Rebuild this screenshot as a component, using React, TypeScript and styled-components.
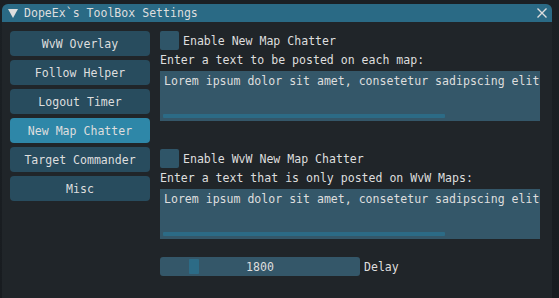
import React from 'react';
import styled, { createGlobalStyle } from 'styled-components';

const colors = {
  page: '#191d21',
  window: '#202529',
  title: '#2a6a85',
  button: '#284c5e',
  buttonActive: '#2e87a8',
  frame: '#345769',
  check: '#2f5568',
  scroll: '#2c6b86',
  text: '#dedede',
};

const GlobalStyle = createGlobalStyle`
  html, body {
    margin: 0;
    padding: 0;
    background: ${colors.page};
    overflow: hidden;
  }
  body {
    font-family: "DejaVu Sans Mono", "Liberation Mono", monospace;
    font-size: 11.55px;
    color: ${colors.text};
  }
`;

const Page = styled.div`
  width: 559px;
  height: 298px;
  padding: 4px 0 0 2px;
  box-sizing: border-box;
  background: linear-gradient(180deg, #1b2024 0%, #181c20 100%);
`;

const Window = styled.div`
  width: 550px;
  height: 300px;
  background: ${colors.window};
  border-radius: 6px 6px 0 0;
  overflow: hidden;
`;

const TitleBar = styled.div`
  height: 18px;
  background: ${colors.title};
  display: flex;
  align-items: center;
  padding: 0 4px 0 6px;
  gap: 6px;
`;

const Title = styled.span`
  flex: 1;
  line-height: 18px;
  white-space: nowrap;
`;

const Body = styled.div`
  display: flex;
  gap: 10px;
  padding: 9px 8px;
`;

const Sidebar = styled.div`
  width: 140px;
  display: flex;
  flex-direction: column;
  gap: 4px;
`;

const NavButton = styled.div<{ $active?: boolean }>`
  height: 25px;
  border-radius: 4px;
  background: ${(p) => (p.$active ? colors.buttonActive : colors.button)};
  display: flex;
  align-items: center;
  justify-content: center;
  white-space: nowrap;
`;

const Main = styled.div`
  width: 380px;
  display: flex;
  flex-direction: column;
`;

const CheckRow = styled.div<{ $gapTop?: number }>`
  display: flex;
  align-items: center;
  gap: 4px;
  height: 19px;
  margin-top: ${(p) => p.$gapTop ?? 0}px;
`;

const CheckBox = styled.div`
  width: 19px;
  height: 19px;
  border-radius: 2px;
  background: ${colors.check};
`;

const Label = styled.div`
  margin-top: 4px;
  line-height: 13px;
  white-space: nowrap;
`;

const TextBox = styled.div`
  margin-top: 4px;
  height: 50px;
  background: ${colors.frame};
  display: flex;
  flex-direction: column;
  padding: 3px 0 3px 3px;
  box-sizing: border-box;
  overflow: hidden;
`;

const TextLine = styled.div`
  padding-left: 1px;
  line-height: 14px;
  white-space: nowrap;
`;

const ScrollTrack = styled.div`
  margin-top: auto;
  height: 4px;
  display: flex;
`;

const ScrollThumb = styled.div`
  width: 282px;
  height: 4px;
  border-radius: 1px;
  background: ${colors.scroll};
`;

const SliderRow = styled.div`
  margin-top: 18px;
  display: flex;
  align-items: center;
  gap: 4px;
`;

const Slider = styled.div`
  width: 200px;
  height: 19px;
  border-radius: 3px;
  background: ${colors.frame};
  display: flex;
  align-items: center;
  padding: 0 2px;
  box-sizing: border-box;
`;

const Grab = styled.div`
  width: 10px;
  height: 15px;
  margin-left: 27px;
  border-radius: 1px;
  background: ${colors.scroll};
`;

const SliderValue = styled.span`
  flex: 1;
  text-align: center;
  margin-right: 37px;
`;

const navItems = [
  'WvW Overlay',
  'Follow Helper',
  'Logout Timer',
  'New Map Chatter',
  'Target Commander',
  'Misc',
];

const lorem = 'Lorem ipsum dolor sit amet, consetetur sadipscing elit';

const App = () => {
  return (
    <Page>
      <GlobalStyle />
      <Window>
        <TitleBar>
          <svg width="10" height="9" viewBox="0 0 10 9">
            <path d="M0 0 H10 L5 9 Z" fill={colors.text} />
          </svg>
          <Title>DopeEx`s ToolBox Settings</Title>
          <svg width="12" height="12" viewBox="0 0 12 12">
            <path d="M1.5 1.5 L10.5 10.5 M10.5 1.5 L1.5 10.5" stroke={colors.text} strokeWidth="1.4" />
          </svg>
        </TitleBar>
        <Body>
          <Sidebar>
            {navItems.map((item) => (
              <NavButton key={item} $active={item === 'New Map Chatter'}>
                {item}
              </NavButton>
            ))}
          </Sidebar>
          <Main>
            <CheckRow>
              <CheckBox />
              <span>Enable New Map Chatter</span>
            </CheckRow>
            <Label>Enter a text to be posted on each map:</Label>
            <TextBox>
              <TextLine>{lorem}</TextLine>
              <ScrollTrack>
                <ScrollThumb />
              </ScrollTrack>
            </TextBox>

            <CheckRow $gapTop={28}>
              <CheckBox />
              <span>Enable WvW New Map Chatter</span>
            </CheckRow>
            <Label>Enter a text that is only posted on WvW Maps:</Label>
            <TextBox>
              <TextLine>{lorem}</TextLine>
              <ScrollTrack>
                <ScrollThumb />
              </ScrollTrack>
            </TextBox>

            <SliderRow>
              <Slider>
                <Grab />
                <SliderValue>1800</SliderValue>
              </Slider>
              <span>Delay</span>
            </SliderRow>
          </Main>
        </Body>
      </Window>
    </Page>
  );
};

export default App;
